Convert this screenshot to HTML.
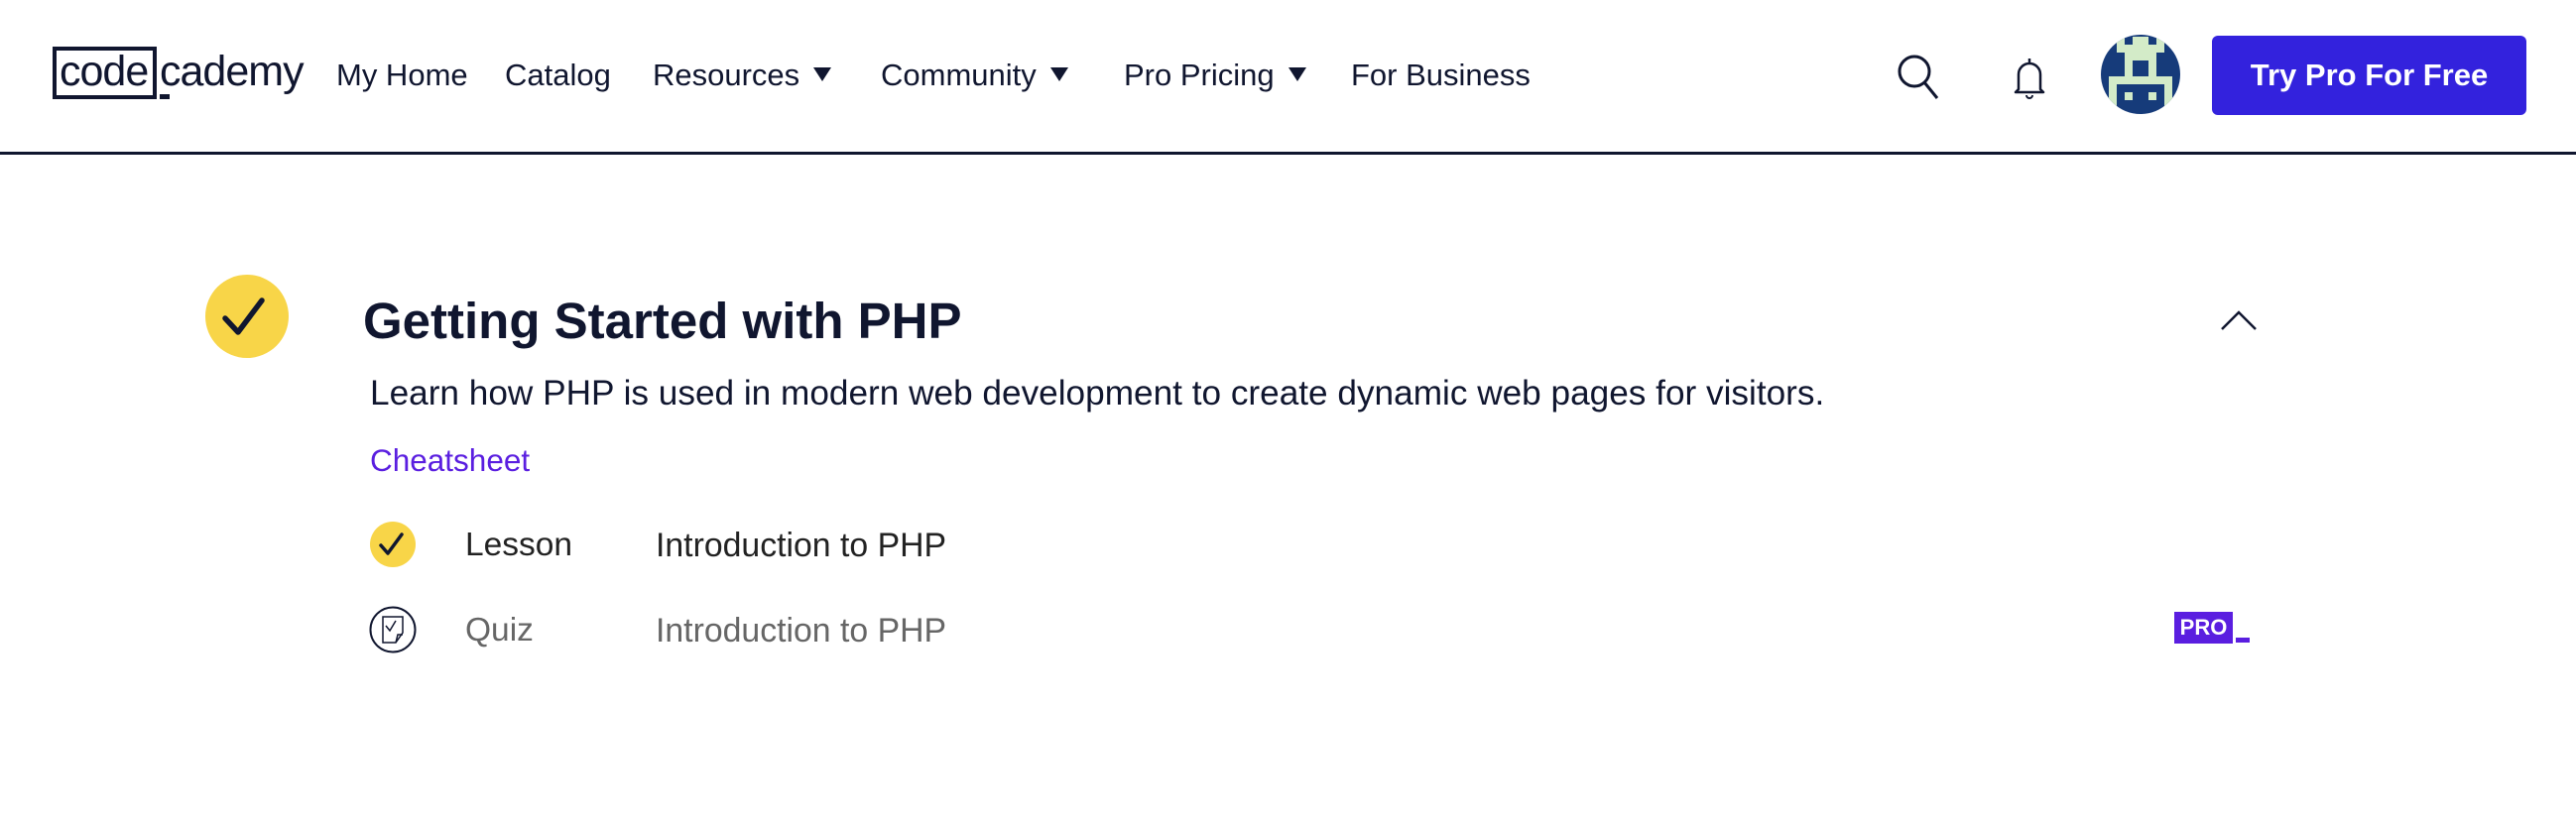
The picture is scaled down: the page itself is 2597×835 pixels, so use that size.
<!DOCTYPE html>
<html><head><meta charset="utf-8"><style>
*{margin:0;padding:0;box-sizing:border-box}
body{width:2597px;height:835px;background:#fff;font-family:"Liberation Sans",Arial,sans-serif;color:#10162f;position:relative;overflow:hidden}
.a{position:absolute;white-space:nowrap}
.nav{font-size:31px;top:56px;line-height:40px}
.tri{display:inline-block;width:0;height:0;border-left:9px solid transparent;border-right:9px solid transparent;border-top:14px solid #10162f;margin-left:14px;vertical-align:4px}
</style></head><body>
<!-- logo -->
<div class="a" style="left:53px;top:47px;width:105px;height:53px;border:4px solid #10162f"></div>
<div class="a" style="left:60px;top:44px;font-size:43px;line-height:56px;letter-spacing:-1px">code</div>
<div class="a" style="left:161px;top:44px;font-size:43px;line-height:56px;letter-spacing:-1px">cademy</div>
<div class="a" style="left:161px;top:95px;width:10px;height:5px;background:#10162f"></div>
<div class="a nav" style="left:339px">My Home</div>
<div class="a nav" style="left:509px">Catalog</div>
<div class="a nav" style="left:658px">Resources<span class="tri"></span></div>
<div class="a nav" style="left:888px">Community<span class="tri"></span></div>
<div class="a nav" style="left:1133px">Pro Pricing<span class="tri"></span></div>
<div class="a nav" style="left:1362px">For Business</div>
<!-- search -->
<svg class="a" style="left:1910px;top:52px" width="50" height="50" viewBox="0 0 50 50"><circle cx="20" cy="20" r="15" fill="none" stroke="#10162f" stroke-width="3"/><line x1="30" y1="31" x2="43" y2="47" stroke="#10162f" stroke-width="3"/></svg>
<!-- bell -->
<svg class="a" style="left:2026px;top:56px" width="40" height="46" viewBox="0 0 40 46"><path d="M20 3v4M9 34V19a11 11 0 0 1 22 0v15l3 3H6z" fill="none" stroke="#10162f" stroke-width="2.5" stroke-linejoin="round"/><path d="M17 40a3 3 0 0 0 6 0" fill="none" stroke="#10162f" stroke-width="2"/></svg>
<!-- avatar -->
<svg class="a" style="left:2118px;top:35px" width="80" height="80" viewBox="0 0 80 80"><defs><clipPath id="c"><circle cx="40" cy="40" r="40"/></clipPath></defs><g clip-path="url(#c)"><rect width="80" height="80" fill="#163b7a"/><g fill="#d3ebc8"><rect x="16" y="0" width="8" height="18"/><rect x="56" y="0" width="8" height="18"/><rect x="32" y="2" width="16" height="8"/><rect x="16" y="10" width="48" height="8"/><rect x="24" y="18" width="32" height="32"/><rect x="8" y="42" width="64" height="8"/><rect x="8" y="42" width="8" height="40"/><rect x="64" y="42" width="8" height="40"/><rect x="24" y="50" width="8" height="16"/><rect x="48" y="50" width="8" height="16"/></g><rect x="32" y="26" width="16" height="16" fill="#163b7a"/><rect x="24" y="50" width="32" height="8" fill="#163b7a"/></g></svg>
<!-- button -->
<div class="a" style="left:2230px;top:36px;width:317px;height:80px;background:#3322dd;border-radius:6px;color:#fff;font-weight:bold;font-size:31px;line-height:80px;text-align:center">Try Pro For Free</div>
<div class="a" style="left:0;top:153px;width:2597px;height:3px;background:#10162f"></div>
<!-- content -->
<svg class="a" style="left:207px;top:277px" width="84" height="84" viewBox="0 0 84 84"><circle cx="42" cy="42" r="42" fill="#f8d548"/><path d="M20 44l13 14 24-32" fill="none" stroke="#10162f" stroke-width="5.5" stroke-linecap="round" stroke-linejoin="round"/></svg>
<div class="a" style="left:366px;top:294px;font-size:51px;font-weight:bold;line-height:60px;letter-spacing:0px">Getting Started with PHP</div>
<svg class="a" style="left:2237px;top:310px" width="40" height="26" viewBox="0 0 40 26"><path d="M3 22L20 5l17 17" fill="none" stroke="#10162f" stroke-width="2.5"/></svg>
<div class="a" style="left:373px;top:377px;font-size:35.2px;line-height:40px">Learn how PHP is used in modern web development to create dynamic web pages for visitors.</div>
<div class="a" style="left:373px;top:444px;font-size:31.5px;line-height:40px;color:#5a1ee0">Cheatsheet</div>
<svg class="a" style="left:372px;top:525px" width="48" height="48" viewBox="0 0 48 48"><circle cx="24" cy="24" r="23" fill="#f8d548"/><path d="M12 25l7 8 14-19" fill="none" stroke="#10162f" stroke-width="3.5" stroke-linecap="round" stroke-linejoin="round"/></svg>
<div class="a" style="left:469px;top:530px;font-size:33.5px;line-height:40px;color:#222">Lesson</div>
<div class="a" style="left:661px;top:530px;font-size:33.8px;line-height:40px;color:#222">Introduction to PHP</div>
<svg class="a" style="left:372px;top:611px" width="48" height="48" viewBox="0 0 48 48"><circle cx="24" cy="24" r="22.5" fill="none" stroke="#10162f" stroke-width="2"/><path d="M14 11h20v16l-7 10H14z" fill="none" stroke="#10162f" stroke-width="1.5"/><path d="M27 37l2-8h5" fill="none" stroke="#10162f" stroke-width="1.5"/><path d="M17 20l4 5 6-10" fill="none" stroke="#10162f" stroke-width="1.5"/></svg>
<div class="a" style="left:469px;top:616px;font-size:33.5px;line-height:40px;color:#666">Quiz</div>
<div class="a" style="left:661px;top:616px;font-size:33.8px;line-height:40px;color:#666">Introduction to PHP</div>
<div class="a" style="left:2192px;top:617px;width:59px;height:32px;background:#5a1ee0;color:#fff;font-weight:bold;font-size:22px;line-height:32px;text-align:center">PRO</div>
<div class="a" style="left:2254px;top:643px;width:14px;height:5px;background:#5a1ee0"></div>
</body></html>
